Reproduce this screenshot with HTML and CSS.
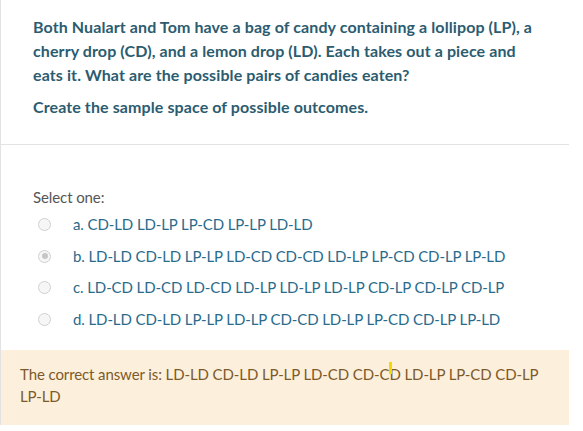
FILE: index.html
```html
<!DOCTYPE html>
<html>
<head>
<meta charset="utf-8">
<link rel="stylesheet" href="styles.css">
</head>
<body>
<div class="que">
  <div class="qtext">
    <p>Both Nualart and Tom have a bag of candy containing a lollipop (LP), a<br>cherry drop (CD), and a lemon drop (LD). Each takes out a piece and<br>eats it. What are the possible pairs of candies eaten?</p>
    <p>Create the sample space of possible outcomes.</p>
  </div>
  <div class="ablock">
    <div class="prompt">Select one:</div>
    <div class="answer">
      <div class="opt"><span class="radio"></span><span class="label">a. CD-LD LD-LP LP-CD LP-LP LD-LD</span></div>
      <div class="opt"><span class="radio checked"></span><span class="label">b. LD-LD CD-LD LP-LP LD-CD CD-CD LD-LP LP-CD CD-LP LP-LD</span></div>
      <div class="opt"><span class="radio"></span><span class="label">c. LD-CD LD-CD LD-CD LD-LP LD-LP LD-LP CD-LP CD-LP CD-LP</span></div>
      <div class="opt"><span class="radio"></span><span class="label">d. LD-LD CD-LD LP-LP LD-LP CD-CD LD-LP LP-CD CD-LP LP-LD</span></div>
    </div>
  </div>
  <div class="outcome">
    <div class="rightanswer">The correct answer is: LD-LD CD-LD LP-LP LD-CD CD-C<span class="caret-wrap"><span class="caret"></span></span>D LD-LP LP-CD CD-LP LP-LD</div>
  </div>
</div>
</body>
</html>
```

FILE: styles.css
```css
html, body {
  margin: 0;
  padding: 0;
  background: #fff;
}
body {
  font-family: Lato, "Open Sans", sans-serif;
  font-size: 15px;
  letter-spacing: -0.1px;
}
.que {
  width: 568px;
  border-left: 1px solid #e2e2e2;
  height: 425px;
}
.qtext {
  padding: 15px 20px 0 32px;
  border-bottom: 1px solid #e3e3e3;
  color: #2c5c70;
  font-weight: bold;
  font-size: 16px;
  letter-spacing: 0.1px;
  line-height: 24px;
  height: 129px;
  white-space: nowrap;
}
.qtext p {
  margin: 0 0 8px 0;
}
.ablock {
  padding: 42px 0 0 32px;
  height: 163px;
}
.prompt {
  color: #555;
  line-height: 20px;
  margin-bottom: 7px;
}
.answer {
  display: flex;
  flex-direction: column;
  gap: 10.5px;
}
.opt {
  display: flex;
  align-items: center;
  height: 21px;
  line-height: 21px;
  color: #2a6b8c;
}
.radio {
  width: 13px;
  height: 13px;
  border-radius: 50%;
  border: 1px solid #d0d0d0;
  background: #f6f6f6;
  margin-left: 5px;
  margin-right: 22px;
  box-sizing: border-box;
  position: relative;
  flex: none;
}
.radio.checked::after {
  content: "";
  position: absolute;
  left: 2.5px;
  top: 2.5px;
  width: 6px;
  height: 6px;
  border-radius: 50%;
  background: #c6c6c6;
}
.outcome {
  background: #fcefdc;
  color: #7d5a29;
  padding: 13px 20px 0 19px;
  line-height: 22px;
  height: 62px;
}
.caret-wrap {
  position: relative;
  display: inline-block;
  width: 0;
}
.caret {
  position: absolute;
  left: 0;
  top: -18px;
  width: 3px;
  height: 12px;
  background: #f5d800;
}
```
